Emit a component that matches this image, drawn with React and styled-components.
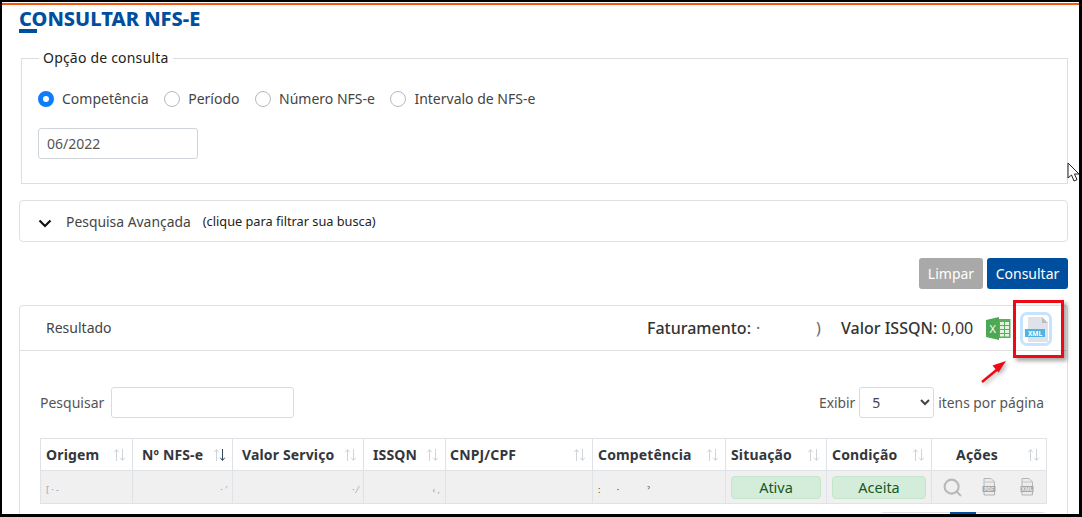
import React from "react";
import styled, { createGlobalStyle } from "styled-components";
import { Search } from "lucide-react";

const GlobalStyle = createGlobalStyle`
  html, body {
    margin: 0;
    padding: 0;
    background: #fff;
    overflow: hidden;
  }
  * {
    box-sizing: border-box;
  }
`;

const columns = [
  { label: "Origem", width: 92, pad: 5 },
  { label: "Nº NFS-e", width: 100, pad: 9, active: true },
  { label: "Valor Serviço", width: 131, pad: 9 },
  { label: "ISSQN", width: 82, pad: 9 },
  { label: "CNPJ/CPF", width: 147, pad: 4 },
  { label: "Competência", width: 133, pad: 5 },
  { label: "Situação", width: 101, pad: 5 },
  { label: "Condição", width: 105, pad: 5 },
  { label: "Ações", width: 115, pad: 5, center: true },
];

const radios = [
  { label: "Competência", checked: true },
  { label: "Período" },
  { label: "Número NFS-e" },
  { label: "Intervalo de NFS-e" },
];

const SortIcon = ({ active }) => (
  <SortSvg width="13" height="14" viewBox="0 0 13 14">
    <path d="M3.500 13V2M1.200 4.300l2.300-2.800 2.300 2.800" fill="none" stroke="#d0d4d8" strokeWidth="1" />
    <path d="M9.500 1v11M7.200 9.700l2.300 2.800 2.300-2.800" fill="none" stroke={active ? "#33475b" : "#d0d4d8"} strokeWidth="1" />
  </SortSvg>
);

const ExcelIcon = () => (
  <svg width="25" height="23" viewBox="0 0 25 23">
    <rect x="11" y="2" width="13.500" height="19" fill="#58b05c" />
    <path d="M14 5h9v3h-9zM14 9h9v3h-9zM14 13h9v3h-9zM14 17h9v2.500h-9z" fill="#e4f3e4" />
    <path d="M18.500 4v16" stroke="#58b05c" strokeWidth="1" />
    <path d="M0 3 13 0v23L0 20z" fill="#4ea853" />
    <text x="3.500" y="16" fontFamily="Noto Sans, sans-serif" fontSize="11" fill="#fff">X</text>
  </svg>
);

const XmlIcon = () => (
  <svg width="23" height="25" viewBox="0 0 23 25">
    <path d="M3 0h14l6 6v19H3z" fill="#dfe2e8" />
    <path d="M17 0l6 6h-6z" fill="#b9bdc4" />
    <rect x="0" y="12" width="20" height="8" fill="#4db4e6" />
    <text x="10" y="18.500" textAnchor="middle" fontFamily="Noto Sans, sans-serif" fontWeight="700" fontSize="6.500" fill="#fff">XML</text>
  </svg>
);

const DocIcon = ({ label }) => (
  <svg width="14" height="18" viewBox="0 0 14 18">
    <path d="M2 .5h7l3.500 3.500v13H2z" fill="#ececec" stroke="#b4b4b4" />
    <path d="M2 4h10.500" stroke="#c4c4c4" />
    <rect x=".5" y="8" width="13" height="6" fill="#a8a8a8" />
    <text x="7" y="13" textAnchor="middle" fontFamily="Noto Sans, sans-serif" fontWeight="700" fontSize="5" fill="#eee">{label}</text>
  </svg>
);

const App = () => {
  return (
    <Frame>
      <GlobalStyle />
      <TopLine />
      <Content>
        <Title>CONSULTAR NFS-E</Title>

        <Fieldset>
          <Legend>Opção de consulta</Legend>
          <RadioRow>
            {radios.map((radio) => (
              <RadioLabel key={radio.label}>
                <RadioDot $checked={radio.checked} />
                {radio.label}
              </RadioLabel>
            ))}
          </RadioRow>
          <PeriodInput defaultValue="06/2022" />
        </Fieldset>

        <Accordion>
          <ChevronSvg width="14" height="9" viewBox="0 0 14 9">
            <path d="M1.500 1.500 7 7l5.500-5.500" fill="none" stroke="#111" strokeWidth="2.200" />
          </ChevronSvg>
          <AccordionTitle>Pesquisa Avançada</AccordionTitle>
          <AccordionHint>(clique para filtrar sua busca)</AccordionHint>
        </Accordion>

        <Actions>
          <ClearButton>Limpar</ClearButton>
          <SubmitButton>Consultar</SubmitButton>
        </Actions>

        <ResultPanel>
          <ResultHeader>
            <ResultTitle>Resultado</ResultTitle>
            <Totals>
              <Total $width={194}>
                <strong>Faturamento:</strong>
                <Speck $left={109}>·</Speck>
                <Speck $left={169}>)</Speck>
              </Total>
              <Total $width={145}>
                <strong>Valor ISSQN:</strong> 0,00
              </Total>
              <ExcelWrap>
                <ExcelIcon />
              </ExcelWrap>
              <XmlFrame>
                <XmlIcon />
              </XmlFrame>
            </Totals>
          </ResultHeader>

          <ResultBody>
            <Filters>
              <SearchLabel>
                Pesquisar
                <SearchInput />
              </SearchLabel>
              <PageSize>
                Exibir
                <PageSelect defaultValue="5">
                  <option value="5">5</option>
                </PageSelect>
                itens por página
              </PageSize>
            </Filters>

            <Table>
              <colgroup>
                {columns.map((col) => (
                  <col key={col.label} style={{ width: col.width }} />
                ))}
              </colgroup>
              <thead>
                <tr>
                  {columns.map((col) => (
                    <Th key={col.label} $pad={col.pad}>
                      <ThInner $center={col.center}>
                        <span>{col.label}</span>
                        <SortIcon active={col.active} />
                      </ThInner>
                    </Th>
                  ))}
                </tr>
              </thead>
              <tbody>
                <tr>
                  <Td><Blur>[ · -</Blur></Td>
                  <Td $right><Blur>· ′</Blur></Td>
                  <Td $right><Blur>· ⁄</Blur></Td>
                  <Td $right><Blur>‹ ,</Blur></Td>
                  <Td />
                  <Td><Blur $dark>:&nbsp;&nbsp;&nbsp;&nbsp;&nbsp;&nbsp;&nbsp;·&nbsp;&nbsp;&nbsp;&nbsp;&nbsp;&nbsp;&nbsp;&nbsp;&nbsp;&nbsp;&nbsp;&nbsp;ˀ</Blur></Td>
                  <Td><Badge>Ativa</Badge></Td>
                  <Td><Badge>Aceita</Badge></Td>
                  <Td>
                    <RowActions>
                      <Search size={21} color="#b9b9b9" strokeWidth={2.400} />
                      <DocIcon label="PDF" />
                      <DocIcon label="XML" />
                    </RowActions>
                  </Td>
                </tr>
              </tbody>
            </Table>

            <Pagination>
              <PageItem $width={70} />
              <PageItem $active $width={26} />
              <PageItem $width={70} />
            </Pagination>
          </ResultBody>
        </ResultPanel>
      </Content>

      <Highlight />
      <ArrowSvg width="30" height="26" viewBox="0 0 30 26">
        <path d="M3 24 20 10" stroke="#ee0a14" strokeWidth="2.400" />
        <path d="M27 3 13.500 7.500l6 7z" fill="#ee0a14" />
      </ArrowSvg>
      <CursorSvg width="13" height="20" viewBox="0 0 13 20">
        <path d="M1 1v15l3.500-3 2.500 6 3-1.300-2.500-5.700H12z" fill="#fff" stroke="#222" strokeWidth="1" />
      </CursorSvg>
    </Frame>
  );
};

export default App;

const Frame = styled.div`
  position: relative;
  width: 1082px;
  height: 517px;
  overflow: hidden;
  background: #fff;
  border-style: solid;
  border-color: #000;
  border-width: 2px 3px 3px 2px;
  font-family: "Noto Sans", "Open Sans", sans-serif;
  font-size: 14px;
  color: #333;
`;

const TopLine = styled.div`
  height: 2px;
  margin-top: 1px;
  background: #f4570f;
`;

const Content = styled.div`
  padding: 0 11px 0 17px;
`;

const Title = styled.h1`
  position: relative;
  margin: 0;
  height: 44px;
  font-size: 20px;
  line-height: 28px;
  font-weight: 800;
  color: #004f9f;

  &::after {
    content: "";
    position: absolute;
    left: 0;
    top: 24px;
    width: 18px;
    height: 4px;
    background: #004f9f;
  }
`;

const Fieldset = styled.fieldset`
  margin: 0 0 16px 2px;
  padding: 14px 16px 0;
  height: 135px;
  border: 1px solid #dedede;
  min-width: 0;
`;

const Legend = styled.legend`
  margin-left: 1px;
  padding: 0 4px;
  font-size: 14px;
  letter-spacing: 0.2px;
  line-height: 18px;
  color: #222;
`;

const RadioRow = styled.div`
  display: flex;
  gap: 15.500px;
  margin-top: 8px;
`;

const RadioLabel = styled.label`
  display: flex;
  align-items: center;
  gap: 8px;
  line-height: 20px;
  color: #444;
`;

const RadioDot = styled.span`
  width: 16px;
  height: 16px;
  border-radius: 50%;
  border: ${(p) => (p.$checked ? "5px solid #0d7dfb" : "1px solid #b5b9bd")};
  background: #fff;
`;

const PeriodInput = styled.input`
  display: block;
  width: 160px;
  height: 31px;
  margin-top: 19px;
  padding: 0 8px;
  border: 1px solid #ced4da;
  border-radius: 3px;
  font: inherit;
  font-size: 14px;
  color: #555;
`;

const Accordion = styled.div`
  display: flex;
  align-items: center;
  height: 42px;
  padding-left: 18px;
  border: 1px solid #e0e0e0;
  border-radius: 4px;
`;

const ChevronSvg = styled.svg`
  margin-right: 14px;
  margin-top: 5px;
`;

const AccordionTitle = styled.span`
  font-size: 13.900px;
  color: #444;
  margin-right: 12px;
`;

const AccordionHint = styled.span`
  font-size: 12.750px;
  color: #222;
`;

const Actions = styled.div`
  display: flex;
  justify-content: flex-end;
  gap: 4px;
  margin-top: 16px;
`;

const ClearButton = styled.button`
  width: 64px;
  height: 31px;
  padding: 0;
  border: 0;
  border-radius: 3px;
  background: #a9a9a9;
  color: #fff;
  font: inherit;
`;

const SubmitButton = styled(ClearButton)`
  width: 81px;
  background: #004f9f;
`;

const ResultPanel = styled.section`
  margin-top: 16px;
  border: 1px solid #e0e0e0;
  border-radius: 4px 4px 0 0;
  height: 230px;
`;

const ResultHeader = styled.div`
  display: flex;
  align-items: center;
  justify-content: space-between;
  height: 45px;
  padding-left: 26px;
  border-bottom: 1px solid #e0e0e0;
`;

const ResultTitle = styled.span`
  font-size: 14px;
  color: #444;
  margin-bottom: 2px;
`;

const Totals = styled.div`
  display: flex;
  align-items: center;
`;

const Total = styled.span`
  position: relative;
  width: ${(p) => p.$width}px;
  font-size: 16px;
  color: #333;

  strong {
    font-weight: 500;
  }
`;

const Speck = styled.span`
  position: absolute;
  left: ${(p) => p.$left}px;
  top: 0;
  color: #667;
`;

const ExcelWrap = styled.span`
  display: flex;
  width: 34px;
`;

const XmlFrame = styled.span`
  display: flex;
  align-items: center;
  justify-content: center;
  width: 32px;
  height: 34px;
  margin: 2px 15px 0 0;
  border: 3px solid #c8e4fc;
  border-radius: 7px;
`;

const ResultBody = styled.div`
  padding: 36px 20px 0;
`;

const Filters = styled.div`
  display: flex;
  align-items: center;
  justify-content: space-between;
  height: 31px;
  margin-bottom: 20px;
  padding-right: 3px;
`;

const SearchLabel = styled.label`
  display: flex;
  align-items: center;
  gap: 7px;
  font-size: 14px;
  color: #555;
`;

const SearchInput = styled.input`
  width: 183px;
  height: 31px;
  border: 1px solid #d8dce0;
  border-radius: 3px;
`;

const PageSize = styled.div`
  display: flex;
  align-items: center;
  gap: 4px;
  font-size: 13.800px;
  color: #555;
`;

const PageSelect = styled.select`
  width: 75px;
  height: 31px;
  padding-left: 8px;
  border: 1px solid #d8dce0;
  border-radius: 3px;
  background: #fff;
  font: inherit;
  font-size: 14px;
  color: #444;
`;

const Table = styled.table`
  width: 1006px;
  table-layout: fixed;
  border-collapse: collapse;
`;

const Th = styled.th`
  height: 32px;
  padding: 0 5px 0 ${(p) => p.$pad}px;
  border: 1px solid #dfe2e6;
  text-align: left;
  font-size: 14px;
  font-weight: 700;
  letter-spacing: 0.15px;
  color: #33373d;
`;

const ThInner = styled.div`
  display: flex;
  align-items: center;
  justify-content: space-between;

  span {
    flex: ${(p) => (p.$center ? 1 : "none")};
    text-align: ${(p) => (p.$center ? "center" : "left")};
    padding-right: ${(p) => (p.$center ? "10px" : "0")};
  }
`;

const SortSvg = styled.svg`
  flex: none;
  margin-right: 1px;
`;

const Td = styled.td`
  height: 33px;
  padding: 0 5px;
  border: 1px solid #dfe2e6;
  background: #f0f0f0;
  text-align: ${(p) => (p.$right ? "right" : "left")};
`;

const Blur = styled.span`
  font-size: 9px;
  color: ${(p) => (p.$dark ? "#444" : "#9aa4b0")};
`;

const Badge = styled.div`
  height: 23px;
  border: 1px solid #c3e6cb;
  border-radius: 4px;
  background: #d4edda;
  color: #155724;
  text-align: center;
  font-size: 14.500px;
  line-height: 21px;
`;

const RowActions = styled.div`
  display: grid;
  grid-template-columns: 40px 38px 14px;
  align-items: center;
  padding-left: 5px;
`;

const Pagination = styled.div`
  display: flex;
  width: 168px;
  height: 30px;
  margin: 8px 0 0 auto;
  border: 1px solid #dee2e6;
  border-radius: 4px;
`;

const PageItem = styled.span`
  width: ${(p) => p.$width}px;
  margin-top: ${(p) => (p.$active ? "-1px" : "0")};
  background: ${(p) => (p.$active ? "#004f9f" : "#fff")};
`;

const Highlight = styled.div`
  position: absolute;
  left: 1011px;
  top: 298px;
  width: 51px;
  height: 58px;
  border: 3px solid #ee0a14;
  box-shadow: 3px 3px 4px rgba(0, 0, 0, 0.35);
`;

const ArrowSvg = styled.svg`
  position: absolute;
  left: 977px;
  top: 356px;
  filter: drop-shadow(2px 2px 2px rgba(0, 0, 0, 0.3));
`;

const CursorSvg = styled.svg`
  position: absolute;
  left: 1065px;
  top: 160px;
`;
